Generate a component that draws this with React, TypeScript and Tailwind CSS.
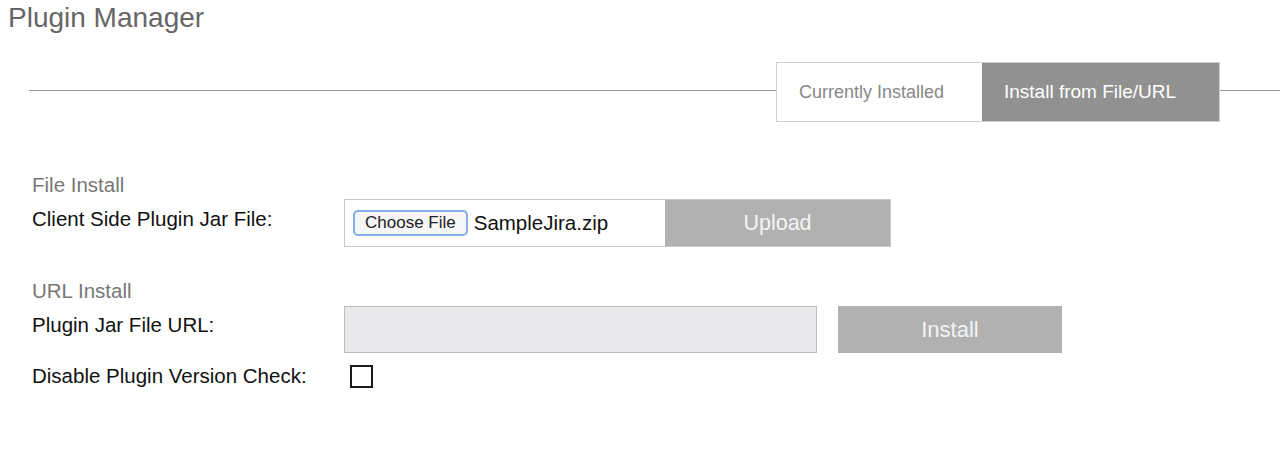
export default function App() {
  return (
    <div className="w-[1280px] h-[454px] bg-white font-['Liberation_Sans',Arial,sans-serif] overflow-hidden">
      <div className="pl-[8px] pt-[2px] h-[36px] text-[28px] leading-[32px] text-[#666]">Plugin Manager</div>
      <div className="mt-[26px] flex items-start">
        <div className="mt-[28px] ml-[29px] flex-1 h-px bg-[#999]" />
        <div className="flex h-[60px] border border-[#cfcfcf]">
          <div className="w-[205px] flex items-center pl-[22px] text-[18px] text-[#888] bg-white">Currently Installed</div>
          <div className="w-[237px] flex items-center pl-[22px] text-[19px] text-white bg-[#919191]">Install from File/URL</div>
        </div>
        <div className="mt-[28px] w-[60px] h-px bg-[#999]" />
      </div>

      <div className="pl-[32px]">
        <div className="mt-[51px] h-[24px] leading-[24px] text-[20.5px] text-[#777]">File Install</div>
        <div className="mt-[2px] flex">
          <div className="w-[312px] h-[40px] leading-[40px] text-[20.5px] text-[#111]">Client Side Plugin Jar File:</div>
          <div className="flex h-[48px] border border-[#c8c8c8]">
            <div className="w-[320px] flex items-center pl-[8px] bg-white">
              <div className="h-[26px] px-[10px] flex items-center rounded-[5px] border-2 border-[#85aee6] bg-[#f6f6f6] text-[17px] text-[#222]">Choose File</div>
              <span className="ml-[6px] text-[20.5px] text-[#111]">SampleJira.zip</span>
            </div>
            <div className="w-[225px] flex items-center justify-center bg-[#b1b1b1] text-[21.5px] text-[#f4f4f4]">Upload</div>
          </div>
        </div>

        <div className="mt-[32px] h-[24px] leading-[24px] text-[20.5px] text-[#777]">URL Install</div>
        <div className="mt-[3px] flex">
          <div className="w-[312px] h-[38px] leading-[38px] text-[20.5px] text-[#111]">Plugin Jar File URL:</div>
          <div className="w-[473px] h-[47px] border border-[#bdbdbd] bg-[#e9e9eb]" />
          <div className="ml-[21px] w-[224px] h-[47px] flex items-center justify-center bg-[#b1b1b1] text-[22px] text-[#f4f4f4]">Install</div>
        </div>

        <div className="mt-[10px] flex items-center">
          <div className="w-[318px] text-[20.5px] leading-[26px] text-[#111]">Disable Plugin Version Check:</div>
          <div className="w-[23px] h-[23px] border-[2.5px] border-[#1a1a1a] bg-white" />
        </div>
      </div>
    </div>
  );
}
